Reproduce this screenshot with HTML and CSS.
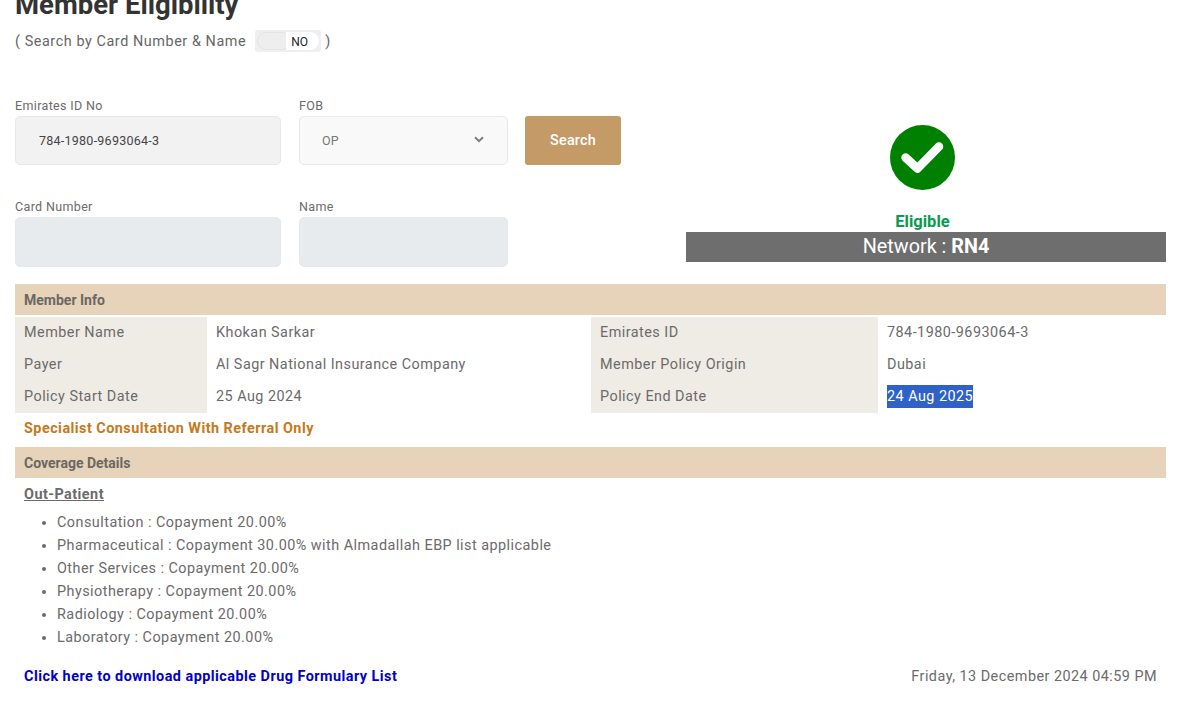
FILE: index.html
```html
<!DOCTYPE html>
<html lang="en">
<head>
<meta charset="utf-8">
<title>Member Eligibility</title>
<link rel="stylesheet" href="styles.css">
</head>
<body>
<main class="page">
  <h1 class="title">Member Eligibility</h1>
  <div class="toggle-line">
    <span>( Search by Card Number &amp; Name</span>
    <span class="toggle"><span class="knob"></span><span class="toggle-text">NO</span></span>
    <span>)</span>
  </div>
  <section class="top">
    <div class="form">
      <div class="field id-field">
        <label class="label">Emirates ID No</label>
        <div class="input filled">784-1980-9693064-3</div>
      </div>
      <div class="field fob-field">
        <label class="label">FOB</label>
        <div class="input select">
          <span>OP</span>
          <svg class="chevron" width="10" height="7" viewBox="0 0 10 7"><path d="M1 1.2 5 5.2 9 1.2" fill="none" stroke="#7d7d7d" stroke-width="2"/></svg>
        </div>
      </div>
      <button class="search" type="button">Search</button>
      <div class="field">
        <label class="label">Card Number</label>
        <div class="input disabled"></div>
      </div>
      <div class="field">
        <label class="label">Name</label>
        <div class="input disabled"></div>
      </div>
    </div>
    <aside class="status">
      <svg class="check" width="65" height="65" viewBox="0 0 65 65">
        <circle cx="32.5" cy="32.5" r="32.5" fill="#008000"/>
        <path d="M15.5 32.5 27.5 43.5 49 21.5" fill="none" stroke="#fff" stroke-width="8.5" stroke-linecap="round" stroke-linejoin="round"/>
      </svg>
      <div class="eligible">Eligible</div>
      <div class="network">Network : <strong>RN4</strong></div>
    </aside>
  </section>

  <h2 class="band">Member Info</h2>
  <div class="info">
    <div class="key">Member Name</div><div class="val">Khokan Sarkar</div>
    <div class="key">Emirates ID</div><div class="val">784-1980-9693064-3</div>
    <div class="key">Payer</div><div class="val">Al Sagr National Insurance Company</div>
    <div class="key">Member Policy Origin</div><div class="val">Dubai</div>
    <div class="key">Policy Start Date</div><div class="val">25 Aug 2024</div>
    <div class="key">Policy End Date</div><div class="val"><span class="selected">24 Aug 2025</span></div>
  </div>
  <p class="notice">Specialist Consultation With Referral Only</p>
  <h2 class="band">Coverage Details</h2>
  <h3 class="sub">Out-Patient</h3>
  <ul class="benefits">
    <li>Consultation : Copayment 20.00%</li>
    <li>Pharmaceutical : Copayment 30.00% with Almadallah EBP list applicable</li>
    <li>Other Services : Copayment 20.00%</li>
    <li>Physiotherapy : Copayment 20.00%</li>
    <li>Radiology : Copayment 20.00%</li>
    <li>Laboratory : Copayment 20.00%</li>
  </ul>
  <footer class="foot">
    <a class="download" href="#">Click here to download applicable Drug Formulary List</a>
    <span class="stamp">Friday, 13 December 2024 04:59 PM</span>
  </footer>
</main>
</body>
</html>
```
FILE: styles.css
```css
* { box-sizing: border-box; }
html, body { margin: 0; height: 715px; overflow: hidden; background: #fff; }
body { font-family: Roboto, "Liberation Sans", sans-serif; color: #6c6a6a; font-size: 14.4px; letter-spacing: .47px; }
.page { padding: 0 29px 0 15px; margin-top: -10px; }
.title { margin: 0; font-size: 27.5px; line-height: 30px; font-weight: 700; color: #333; letter-spacing: 0; }
.toggle-line { display: flex; align-items: center; gap: 9px; height: 24px; margin-top: 9px; color: #666; letter-spacing: .57px; }
.toggle-line span:last-child { margin-left: -5px; }
.toggle { display: flex; align-items: center; justify-content: space-between; width: 66px; height: 22px; background: #f0efef; padding: 2px; border-radius: 3px; }
.knob { width: 34px; height: 18px; border-radius: 9px; background: #eee; border: 1px solid #e4e4e4; }
.toggle-text { flex: 1; height: 18px; line-height: 20px; padding-left: 5px; font-size: 12px; color: #222; letter-spacing: 0; background: #fff; border-radius: 0 9px 9px 0; }
.top { display: flex; margin-top: 45px; }
.form { display: grid; grid-template-columns: 266px 209px 96px; grid-template-rows: 101px auto; column-gap: 18px; align-content: start; width: 671px; }
.field { display: flex; flex-direction: column; }
.label { font-size: 12.5px; line-height: 15px; letter-spacing: .35px; color: #6c6a6a; margin-bottom: 3px; }
.input { height: 49px; border-radius: 5px; border: 1px solid #e8e8e8; display: flex; align-items: center; padding: 0 23px 0 22px; font-size: 12.5px; letter-spacing: .25px; }
.filled { background: #f2f2f2; color: #444; padding-left: 23px; }
.select { background: #f9f9f9; color: #777; justify-content: space-between; }
.chevron { margin-top: -3px; }
.disabled { background: #e8ebed; height: 50px; }
.search { margin: 18px 0 0 -1px; height: 49px; width: 96px; background: #c49a66; color: #fff; border: 0; border-radius: 3px; font: 500 14.4px Roboto, sans-serif; letter-spacing: .2px; }
.status { width: 480px; display: flex; flex-direction: column; align-items: center; padding-top: 27px; }
.check { margin-right: 7px; }
.eligible { margin: 21px 7px 0 0; color: #0a9b4f; font-size: 16.5px; line-height: 21px; font-weight: 700; letter-spacing: 0; }
.network { width: 100%; height: 30px; line-height: 29px; background: #6e6e6e; color: #fff; text-align: center; font-size: 19.8px; letter-spacing: 0; }
.network strong { font-weight: 700; }
.band { margin: 0; height: 31px; line-height: 33px; padding-left: 9px; background: #e6d3ba; color: #6b6863; font-size: 14px; font-weight: 700; letter-spacing: 0; }
.top + .band { margin-top: 17px; }
.info { display: grid; grid-template-columns: 192px 384px 287px 288px; grid-auto-rows: 32px; margin-top: 2px; }
.key, .val { padding-left: 9px; line-height: 32px; }
.key { background: #efece6; }
.selected { background: #2f62c8; color: #fff; display: inline-block; line-height: 23px; }
.notice { margin: 0; height: 34px; line-height: 32px; padding-left: 9px; color: #c8781a; font-weight: 700; }
.sub { margin: 7px 0 0 9px; font-size: 14.4px; line-height: 20px; font-weight: 700; text-decoration: underline; }
.benefits { margin: 6px 0 0; padding: 0 0 0 42px; }
.benefits li { line-height: 23px; }
.foot { display: flex; justify-content: space-between; padding: 0 9px; margin-top: 18px; line-height: 20px; }
.download { color: #0000cd; font-weight: 700; text-decoration: none; }
```
